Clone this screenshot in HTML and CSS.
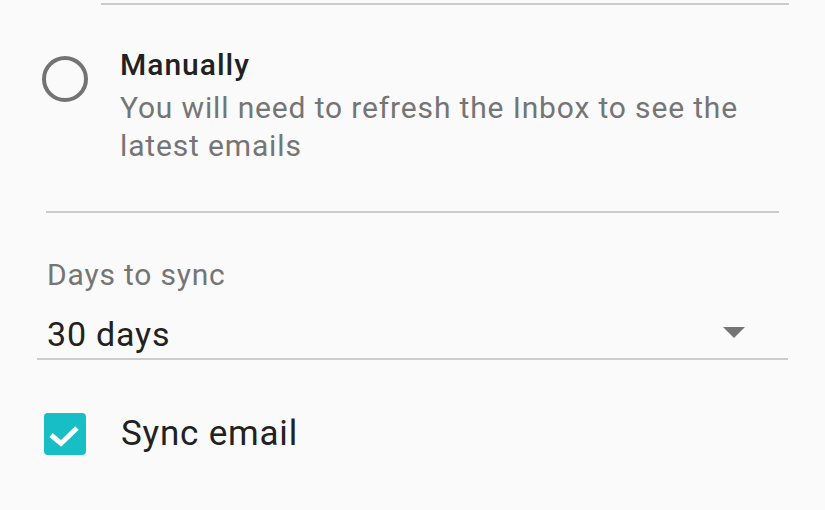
FILE: index.html
```html
<!DOCTYPE html>
<html lang="en">
<head>
  <meta charset="UTF-8">
  <meta name="viewport" content="width=device-width, initial-scale=1.0">
  <title>Sync settings</title>
  <link rel="stylesheet" href="styles.css">
</head>
<body>
  <div class="screen">
    <div class="divider top"></div>

    <div class="option">
      <svg class="radio" width="48" height="48" viewBox="0 0 48 48">
        <circle cx="24" cy="24" r="21" fill="none" stroke="#737373" stroke-width="4"/>
      </svg>
      <div class="option-text">
        <div class="option-title">Manually</div>
        <div class="option-desc">You will need to refresh the Inbox to see the latest emails</div>
      </div>
    </div>

    <div class="divider middle"></div>

    <div class="field-label">Days to sync</div>
    <div class="spinner">
      <span class="spinner-value">30 days</span>
      <span class="spinner-arrow"></span>
    </div>

    <div class="check-row">
      <svg class="checkbox" width="42" height="42" viewBox="0 0 42 42">
        <rect x="0" y="0" width="42" height="42" rx="4" fill="#17bec6"/>
        <polyline points="7,22 17,30.5 33,15" fill="none" stroke="#fff" stroke-width="5"/>
      </svg>
      <span class="check-label">Sync email</span>
    </div>
  </div>
</body>
</html>
```

FILE: styles.css
```css
body {
  margin: 0;
  background: #fafafa;
  font-family: Roboto, "Noto Sans", sans-serif;
  color: #212121;
  letter-spacing: 0.8px;
}

.screen {
  width: 825px;
  height: 510px;
  overflow: hidden;
  display: flex;
  flex-direction: column;
}

.divider {
  height: 2px;
  background: #cccccc;
}

.divider.top {
  margin: 3px 0 0 101px;
  width: 688px;
}

.divider.middle {
  margin: 47px 0 0 46px;
  width: 733px;
}

/* radio option */
.option {
  display: flex;
  align-items: flex-start;
  margin: 44px 0 0 41px;
}

.radio {
  margin-top: 6px;
  flex-shrink: 0;
}

.option-text {
  margin-left: 31px;
  width: 660px;
}

.option-title {
  font-size: 30px;
  font-weight: 500;
  line-height: 32px;
  letter-spacing: 1px;
}

.option-desc {
  margin-top: 8px;
  font-size: 30px;
  line-height: 37.5px;
  letter-spacing: 0.85px;
  color: #757575;
}

/* days to sync */
.field-label {
  margin: 44px 0 0 47px;
  font-size: 30px;
  line-height: 36px;
  color: #757575;
}

.spinner {
  display: flex;
  align-items: center;
  justify-content: space-between;
  margin: 21px 0 0 37px;
  width: 698px;
  padding: 0 43px 4px 10px;
  border-bottom: 2px solid #cccccc;
}

.spinner-value {
  font-size: 34px;
  line-height: 40px;
}

.spinner-arrow {
  width: 0;
  height: 0;
  margin-top: -3px;
  border-left: 11.5px solid transparent;
  border-right: 11.5px solid transparent;
  border-top: 11px solid #757575;
}

/* sync email */
.check-row {
  display: flex;
  align-items: flex-start;
  margin: 53px 0 0 44px;
}

.checkbox {
  flex-shrink: 0;
}

.check-label {
  margin-left: 35px;
  font-size: 35px;
  line-height: 42px;
}
```
